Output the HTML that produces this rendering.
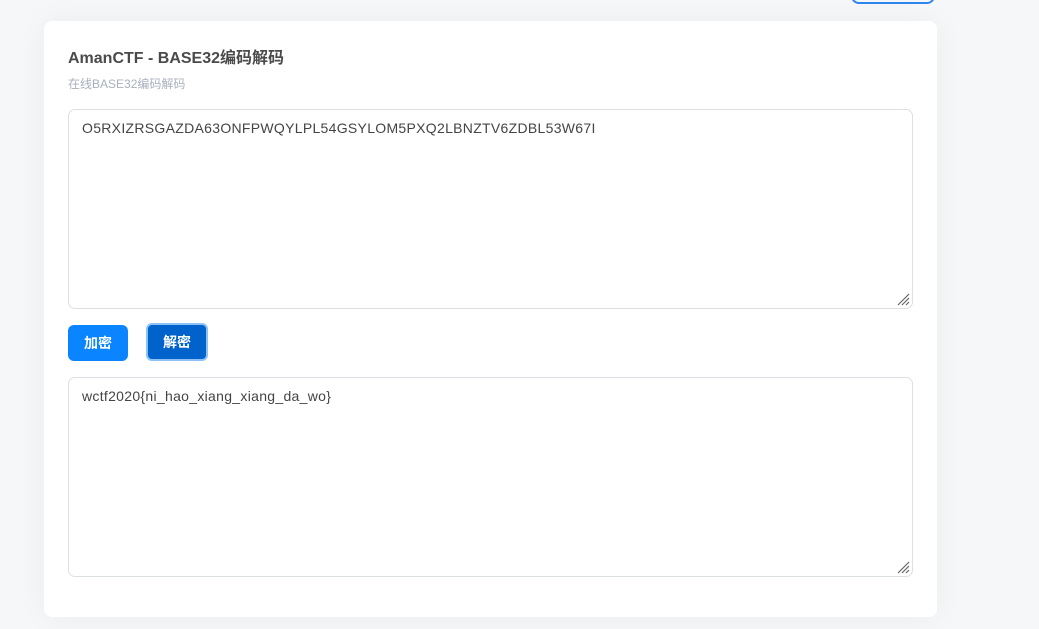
<!DOCTYPE html>
<html><head><meta charset="utf-8"><style>
html,body{margin:0;padding:0;width:1039px;height:629px;overflow:hidden;background:#f6f7f9;font-family:"Liberation Sans","Noto Sans CJK SC",sans-serif;}
.top{position:absolute;left:851px;top:-12px;width:80px;height:12px;border:2px solid #2f86f0;border-radius:8px;background:#f6f7f9}
.card{position:absolute;left:44px;top:21px;width:893px;height:596px;background:#fff;border-radius:8px;box-shadow:0 0 30px rgba(0,0,0,0.05)}
h1{position:absolute;left:24px;top:23px;margin:0;font-size:16px;font-weight:bold;color:#4a4a4a}
.sub{position:absolute;left:24px;top:54px;font-size:12px;color:#aab0bc}
.ta{position:absolute;left:24px;width:845px;height:200px;border:1px solid #dcdfe4;border-radius:7px;box-sizing:border-box;padding:10px 13px;font-size:14px;color:#444;letter-spacing:0.3px}
.ta svg{position:absolute;right:2px;bottom:2px}
.btn{position:absolute;top:304px;height:36px;width:60px;border-radius:6px;color:#fff;font-size:14px;font-weight:bold;display:flex;align-items:center;justify-content:center}
</style></head><body>
<div class="top"></div>
<div class="card">
<h1>AmanCTF - BASE32编码解码</h1>
<div class="sub">在线BASE32编码解码</div>
<div class="ta" style="top:88px">O5RXIZRSGAZDA63ONFPWQYLPL54GSYLOM5PXQ2LBNZTV6ZDBL53W67I<svg width="14" height="14"><path d="M13 2L2 13M13 6L6 13M13 10L10 13" stroke="#666" stroke-width="1.2"/></svg></div>
<div class="btn" style="left:24px;background:#0a84ff">加密</div>
<div class="btn" style="left:102px;top:302px;width:58px;height:34px;background:#0063cc;border:2px solid #8cc2f5">解密</div>
<div class="ta" style="top:356px">wctf2020{ni_hao_xiang_xiang_da_wo}<svg width="14" height="14"><path d="M13 2L2 13M13 6L6 13M13 10L10 13" stroke="#666" stroke-width="1.2"/></svg></div>
</div>
</body></html>
